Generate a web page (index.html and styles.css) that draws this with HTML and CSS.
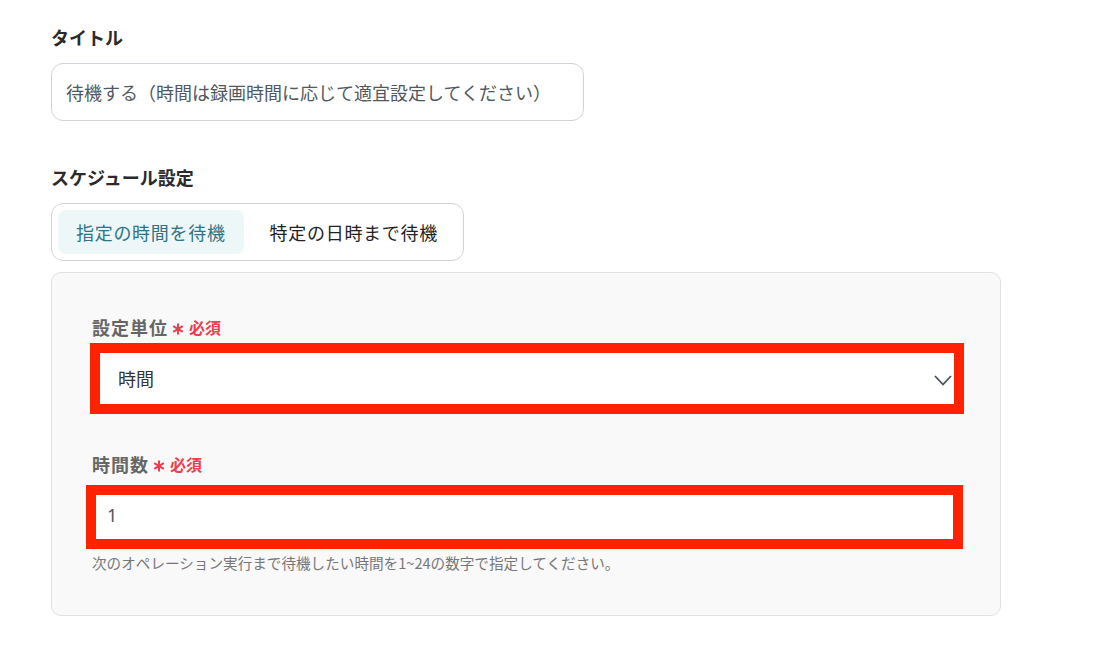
FILE: index.html
```html
<!DOCTYPE html>
<html lang="ja">
  <head>
    <meta charset="UTF-8" />
    <meta name="viewport" content="width=device-width, initial-scale=1.0" />
    <title>待機する</title>
    <link rel="stylesheet" href="styles.css">
  </head>
  <body>
    <div class="form">
      <div class="group">
        <h3 class="label">タイトル</h3>
        <div class="text-input">待機する（時間は録画時間に応じて適宜設定してください）</div>
      </div>

      <div class="group">
        <h3 class="label">スケジュール設定</h3>
        <div class="tabs">
          <button class="tab active">指定の時間を待機</button>
          <button class="tab">特定の日時まで待機</button>
        </div>
        <div class="panel">
          <div class="field">
            <div class="field-label">設定単位 <span class="req"><svg class="star" width="12" height="12" viewBox="0 0 12 12"><path d="M6 0.5 V11.5 M1.2 3.2 L10.8 8.8 M1.2 8.8 L10.8 3.2" stroke="#ea3f4e" stroke-width="2"/></svg>必須</span></div>
            <div class="box">
              <div class="select">
                <span>時間</span>
                <svg class="chevron" width="18" height="11" viewBox="0 0 18 11">
                  <path d="M1 1 L9 9.5 L17 1" fill="none" stroke="#4b5058" stroke-width="1.8"/>
                </svg>
              </div>
              <div class="mark mark-a"></div>
            </div>
          </div>
          <div class="field">
            <div class="field-label">時間数 <span class="req"><svg class="star" width="12" height="12" viewBox="0 0 12 12"><path d="M6 0.5 V11.5 M1.2 3.2 L10.8 8.8 M1.2 8.8 L10.8 3.2" stroke="#ea3f4e" stroke-width="2"/></svg>必須</span></div>
            <div class="box">
              <div class="number">1</div>
              <div class="mark mark-b"></div>
            </div>
            <p class="help">次のオペレーション実行まで待機したい時間を1~24の数字で指定してください。</p>
          </div>
        </div>
      </div>
    </div>
  </body>
</html>
```

FILE: styles.css
```css
* {
  margin: 0;
  padding: 0;
  box-sizing: border-box;
}
body {
  background-color: #fff;
  font-family: "Noto Sans CJK JP", "Noto Sans", sans-serif;
  color: #333;
}
.form {
  padding: 26px 0 0 51px;
  width: 1001px;
}
.group {
  margin-bottom: 45px;
}
.label {
  font-size: 18px;
  font-weight: 700;
  color: #2b2b2b;
  line-height: 22px;
  margin-bottom: 15px;
}
.text-input {
  width: 533px;
  height: 58px;
  border: 1px solid #cfd3d8;
  border-radius: 12px;
  padding: 0 14px;
  display: flex;
  align-items: center;
  font-size: 18px;
  color: #505860;
}
.tabs {
  display: inline-flex;
  gap: 8px;
  padding: 6px;
  border: 1px solid #cfd3d8;
  border-radius: 12px;
  height: 58px;
}
.tab {
  font-family: inherit;
  font-size: 18px;
  letter-spacing: 0.7px;
  border: none;
  background: none;
  border-radius: 8px;
  padding: 0 18px;
  color: #222;
}
.tab.active {
  background-color: #eef7f7;
  color: #2d7486;
}
.tab + .tab {
  padding-left: 18px;
  padding-right: 19px;
}
.panel {
  margin-top: 11px;
  background-color: #f9f9f9;
  border: 1px solid #e2e2e2;
  border-radius: 10px;
  padding: 43px 40px 43px 40px;
}
.field + .field {
  margin-top: 47px;
}
.field-label {
  font-size: 18px;
  font-weight: 700;
  letter-spacing: 1px;
  color: #666;
  line-height: 22px;
  margin-bottom: 12px;
  display: flex;
  align-items: center;
}
.req {
  display: inline-flex;
  align-items: center;
  color: #ea3f4e;
  font-size: 16px;
  letter-spacing: 0;
  margin-left: 4px;
}
.star {
  margin: 3px 5px 0 0;
}
.box {
  position: relative;
}
.select,
.number {
  height: 56px;
  background-color: #fff;
  border: 1px solid #ccc;
  border-radius: 8px;
  display: flex;
  align-items: center;
  font-size: 18px;
  color: #333;
}
.select {
  justify-content: space-between;
  padding: 0 7px 0 25px;
}
.chevron {
  margin-top: 4px;
}
.number {
  padding-left: 14px;
  font-family: "Noto Sans", sans-serif;
  color: #505860;
}
.mark {
  position: absolute;
  border: 10px solid #ff2200;
}
.mark-a {
  top: -7px;
  bottom: -8px;
  left: -2px;
  right: -4px;
}
.mark-b {
  top: -2px;
  bottom: -6px;
  left: -6px;
  right: -3px;
}
.help {
  margin-top: 11px;
  font-size: 14.6px;
  color: #777;
  line-height: 18px;
}
```
